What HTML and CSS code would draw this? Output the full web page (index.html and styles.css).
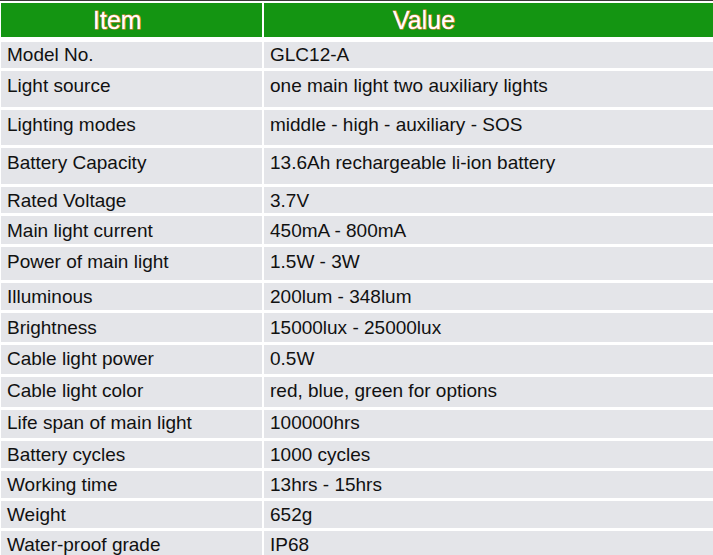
FILE: index.html
```html
<!DOCTYPE html>
<html>
<head>
<meta charset="utf-8">
<link rel="stylesheet" href="styles.css">
</head>
<body>
<div class="topline"></div>
<div class="spec">
  <div class="row head">
    <div class="cell hcell item">Item</div>
    <div class="cell hcell value">Value</div>
  </div>
  <div class="rows">
    <div class="row h26 p2"><div class="cell">Model No.</div><div class="cell">GLC12-A</div></div>
    <div class="row h36 p4"><div class="cell">Light source</div><div class="cell">one main light two auxiliary lights</div></div>
    <div class="row h35 p4"><div class="cell">Lighting modes</div><div class="cell">middle - high - auxiliary - SOS</div></div>
    <div class="row h36 p4"><div class="cell">Battery Capacity</div><div class="cell">13.6Ah rechargeable li-ion battery</div></div>
    <div class="row h26"><div class="cell">Rated Voltage</div><div class="cell">3.7V</div></div>
    <div class="row h28 p4"><div class="cell">Main light current</div><div class="cell">450mA - 800mA</div></div>
    <div class="row h33 p4"><div class="cell">Power of main light</div><div class="cell">1.5W - 3W</div></div>
    <div class="row h27"><div class="cell">Illuminous</div><div class="cell">200lum - 348lum</div></div>
    <div class="row h29 p4"><div class="cell">Brightness</div><div class="cell">15000lux - 25000lux</div></div>
    <div class="row h29"><div class="cell">Cable light power</div><div class="cell">0.5W</div></div>
    <div class="row h30"><div class="cell">Cable light color</div><div class="cell">red, blue, green for options</div></div>
    <div class="row h28 p2"><div class="cell">Life span of main light</div><div class="cell">100000hrs</div></div>
    <div class="row h27"><div class="cell">Battery cycles</div><div class="cell">1000 cycles</div></div>
    <div class="row h27"><div class="cell">Working time</div><div class="cell">13hrs - 15hrs</div></div>
    <div class="row h27"><div class="cell">Weight</div><div class="cell">652g</div></div>
    <div class="row h30"><div class="cell">Water-proof grade</div><div class="cell">IP68</div></div>
  </div>
</div>
</body>
</html>
```
FILE: styles.css
```css
html, body {
  margin: 0;
  padding: 0;
  background: #ffffff;
  overflow: hidden;
}
body {
  font-family: "Liberation Sans", Arial, sans-serif;
  color: #111111;
  width: 713px;
  height: 555px;
}
.topline {
  height: 1px;
  background: #3a3a3a;
}
.spec {
  padding: 2px 0 0 1px;
}
.row {
  display: grid;
  grid-template-columns: 261px 1fr;
  column-gap: 2px;
}
.head {
  height: 34px;
  margin-bottom: 5px;
}
.hcell {
  background: #149512;
  color: #ffffff;
  font-size: 25px;
  line-height: 34px;
  -webkit-text-stroke: 1.1px #ee8a4a;
  paint-order: stroke fill;
}
.hcell.item {
  padding-left: 92px;
}
.hcell.value {
  padding-left: 129px;
}
.rows {
  display: flex;
  flex-direction: column;
  gap: 3px;
}
.rows .cell {
  box-sizing: border-box;
  background: #e4e5e9;
  font-size: 19px;
  line-height: 22px;
  padding: 3px 0 0 6px;
  white-space: nowrap;
}
.rows .p2 .cell {
  padding-top: 2px;
}
.rows .p4 .cell {
  padding-top: 4px;
}
.h26 { height: 26px; }
.h27 { height: 27px; }
.h28 { height: 28px; }
.h29 { height: 29px; }
.h30 { height: 30px; }
.h33 { height: 33px; }
.h35 { height: 35px; }
.h36 { height: 36px; }
```
